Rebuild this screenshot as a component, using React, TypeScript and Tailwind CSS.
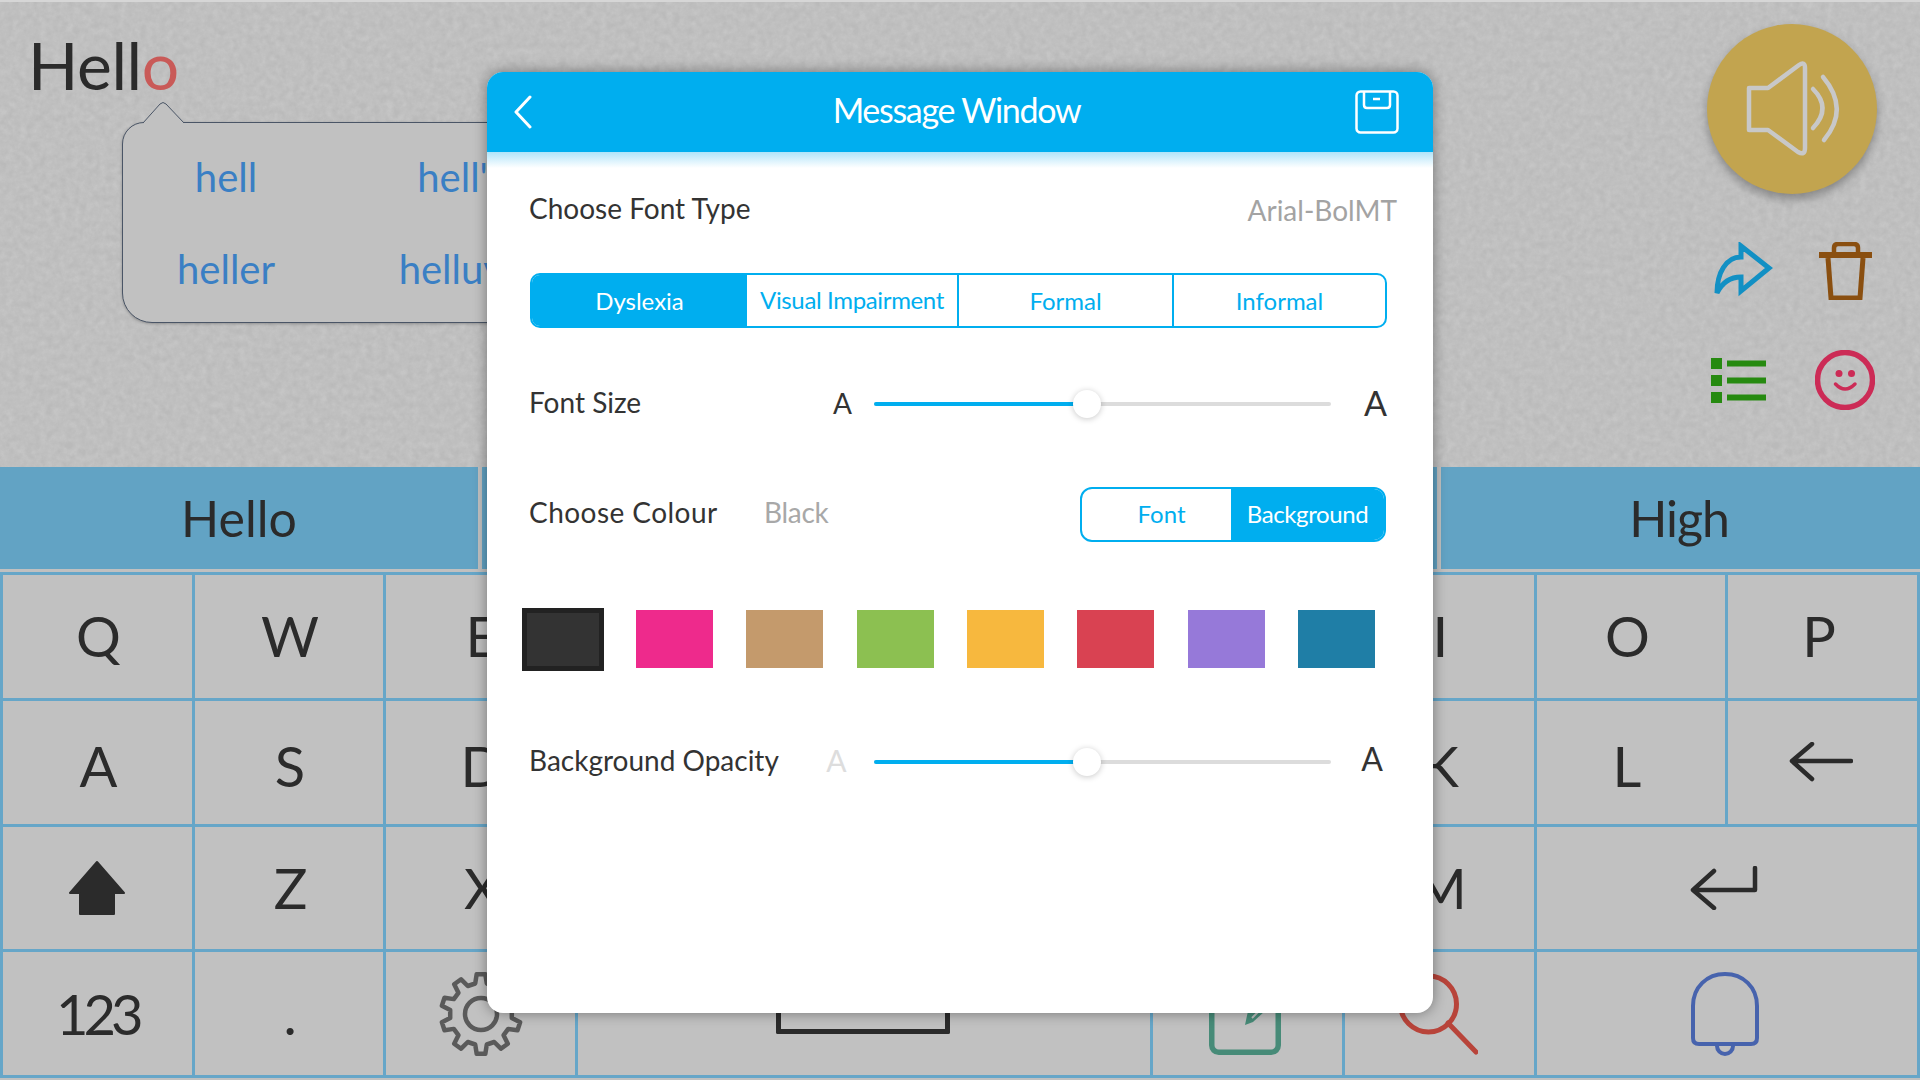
import React from 'react';

const row1 = ['Q', 'W', 'E', 'R', 'T', 'Y', 'U', 'I', 'O', 'P'];
const row2 = ['A', 'S', 'D', 'F', 'G', 'H', 'J', 'K', 'L'];
const row3 = ['Z', 'X', 'C', 'V', 'B', 'N', 'M'];
const swatches = ['#ee2a8c', '#c49a6c', '#8cc051', '#f7b83e', '#d94252', '#9679d9', '#1f7ea6'];

function gearPath(cx: number, cy: number, outer: number, root: number, teeth: number) {
  const pts: string[] = [];
  const step = (Math.PI * 2) / teeth;
  for (let i = 0; i < teeth; i++) {
    const a = i * step - Math.PI / 2;
    const list: [number, number][] = [
      [root, a - step * 0.3],
      [outer, a - step * 0.17],
      [outer, a + step * 0.17],
      [root, a + step * 0.3],
    ];
    list.forEach(([r, t]) => pts.push(`${(cx + r * Math.cos(t)).toFixed(1)} ${(cy + r * Math.sin(t)).toFixed(1)}`));
  }
  return `M${pts.join(' L')} Z`;
}

function Key({ children, className = '' }: { children?: React.ReactNode; className?: string }) {
  return (
    <div className={`flex items-center justify-center bg-[#c1c1c1] text-[56px] leading-none text-[#2b2b2b] ${className}`}>
      {children}
    </div>
  );
}

function Slider({ label, smallClass, bigClass }: { label: string; smallClass: string; bigClass: string }) {
  return (
    <div className="flex h-[44px] items-center">
      <span className="ml-[-1px] w-[291px] pb-[4px] text-[28px] text-[#333]">{label}</span>
      <span className={`w-[45px] text-center ${smallClass}`}>A</span>
      <div className="relative ml-[9px] h-[4px] w-[457px] rounded-full bg-[#dcdcdc]">
        <div className="h-full w-[213px] rounded-full bg-[#00aeef]" />
        <div className="absolute left-[199px] top-[-12px] h-[28px] w-[28px] rounded-full bg-white shadow-[0_1px_6px_rgba(0,0,0,0.22)]" />
      </div>
      <span className={`flex-1 text-right text-[#333] ${bigClass}`}>A</span>
    </div>
  );
}

function Modal() {
  return (
    <div className="absolute left-[487px] top-[72px] h-[941px] w-[946px] overflow-hidden rounded-[16px] bg-white shadow-[0_0_14px_rgba(0,0,0,0.4)]">
      <div className="grid h-[80px] grid-cols-[1fr_auto_1fr] items-center bg-[#00aeef] pl-[27px] pr-[34px]">
        <svg width="18" height="34" viewBox="0 0 18 34" fill="none" stroke="white" strokeWidth="3" strokeLinecap="round" strokeLinejoin="round">
          <path d="M16 2 L2 17 L16 32" />
        </svg>
        <span className="pb-[5px] text-[34px] tracking-[-1.3px] text-white">Message Window</span>
        <svg className="justify-self-end" width="44" height="44" viewBox="0 0 44 44" fill="none" stroke="white" strokeWidth="2.5" strokeLinejoin="round">
          <rect x="1.5" y="1.5" width="41" height="41" rx="4" />
          <path d="M9 2 V15 Q9 18 12 18 H32 Q35 18 35 15 V2" />
          <path d="M18 9 H25" />
        </svg>
      </div>
      <div className="h-[16px] bg-gradient-to-b from-[#b0e4f9] to-white" />

      <div className="pl-[43px] pr-[46px]">
        <div className="flex h-[84px] items-center justify-between">
          <span className="ml-[-1px] pb-[5px] text-[28px] text-[#333]">Choose Font Type</span>
          <span className="mr-[-10px] text-[28px] text-[#a3a3a3]">Arial-BolMT</span>
        </div>

        <div className="mt-[21px] flex h-[55px] overflow-hidden rounded-[10px] border-2 border-[#00aeef] pb-[2px] text-[24px] text-[#00aeef]">
          <div className="mb-[-2px] flex w-[215px] items-center justify-center bg-[#00aeef] text-white">Dyslexia</div>
          <div className="flex w-[210px] items-center justify-center tracking-[-0.35px]">Visual Impairment</div>
          <div className="mb-[-2px] flex w-[215px] items-center justify-center border-l-2 border-[#00aeef]">Formal</div>
          <div className="mb-[-2px] flex flex-1 items-center justify-center border-l-2 border-[#00aeef]">Informal</div>
        </div>

        <div className="mt-[54px]">
          <Slider label="Font Size" smallClass="pb-[2px] text-[28px] text-[#333]" bigClass="pb-[4px] text-[34px]" />
        </div>

        <div className="mt-[61px] flex h-[55px] items-center">
          <span className="ml-[-1px] w-[235px] pb-[6px] text-[28px] tracking-[0.45px] text-[#333]">Choose Colour</span>
          <span className="pb-[6px] text-[28px] tracking-[-0.3px] text-[#a8a8a8]">Black</span>
          <div className="ml-auto mr-[1px] flex h-full w-[306px] overflow-hidden rounded-[12px] border-2 border-[#00aeef] text-[24px]">
            <div className="flex w-[149px] items-center justify-center pb-[1px] pl-[10px] text-[#00aeef]">Font</div>
            <div className="flex flex-1 items-center justify-center bg-[#00aeef] pb-[1px] tracking-[-0.4px] text-white">Background</div>
          </div>
        </div>

        <div className="ml-[-8px] mt-[66px] flex h-[63px] items-start gap-[33.33px]">
          <div className="mr-[-1.33px] h-[63px] w-[82px] border-[5px] border-[#222] bg-[#333]" />
          {swatches.map((c) => (
            <div key={c} className="mt-[2px] h-[58px] w-[77px]" style={{ backgroundColor: c }} />
          ))}
        </div>

        <div className="mt-[69px]">
          <Slider label="Background Opacity" smallClass="ml-[-6px] mr-[6px] pb-[4px] text-[30px] text-[#dddddd]" bigClass="pb-[7px] pr-[4px] text-[32px]" />
        </div>
      </div>
    </div>
  );
}

export default function App() {
  return (
    <div className="relative h-[1080px] w-[1920px] overflow-hidden bg-[#c0c0c0] font-['Lato',sans-serif]">
      <div className="relative flex h-[467px] justify-between border-t-2 border-[#d6d6d6] bg-[#bababa] pl-[28px] pr-[43px]">
        {/* paper grain of the writing area */}
        <svg className="absolute left-0 top-0 h-[465px] w-[1920px] opacity-70">
          <filter id="grain">
            <feTurbulence type="fractalNoise" baseFrequency="0.15" numOctaves="3" seed="4" />
            <feColorMatrix values="0 0 0 0 0.6  0 0 0 0 0.6  0 0 0 0 0.6  1 1 0 0 -0.55" />
          </filter>
          <rect width="1920" height="465" filter="url(#grain)" />
        </svg>

        <div className="relative pt-[23px] text-[66px] leading-[80px] tracking-[-0.4px] text-[#2b2b2b]">
          Hell<span className="text-[#c95a58]">o</span>
        </div>

        <div className="relative pt-[22px]">
          <div className="flex h-[170px] w-[170px] items-center justify-center rounded-full bg-[#c2a44f] shadow-[0_5px_10px_rgba(0,0,0,0.3)]">
            <svg width="170" height="170" viewBox="0 0 170 170" fill="none" stroke="#c8c8c8" strokeWidth="4.5" strokeLinecap="round" strokeLinejoin="round">
              <path d="M42 64 H61 L92 41 Q98 37 98 44 V124 Q98 132 91 128 L61 106 H42 Z" strokeLinecap="butt" />
              <path d="M106 65 Q125 84 106 104" />
              <path d="M116 53 Q143 85 117 116" />
            </svg>
          </div>
          <div className="mt-[48px] flex items-center justify-between pl-[7px] pr-[5px]">
            <svg width="59" height="58" viewBox="0 0 59 58" fill="none" stroke="#1290c4" strokeWidth="5">
              <path d="M27 4 L55 26 L27 49 V35 C16 35 8 41 3 51 C3 31 12 15 27 15 Z" />
            </svg>
            <svg width="53" height="58" viewBox="0 0 53 58" fill="none" stroke="#8a4f10">
              <path d="M0 13 H53" strokeWidth="6" />
              <path d="M15 10 V6 Q15 2 19 2 H35 Q39 2 39 6 V10" strokeWidth="4.5" />
              <path d="M9 16 L12 56 H41 L44 16" strokeWidth="5" />
            </svg>
          </div>
          <div className="mt-[50px] flex items-center justify-between pl-[4px] pr-[2px]">
            <svg width="55" height="45" viewBox="0 0 55 45" fill="#268a10">
              <rect width="11" height="11" />
              <rect y="17" width="11" height="11" />
              <rect y="34" width="11" height="11" />
              <rect x="16" y="2.5" width="39" height="6" />
              <rect x="16" y="19.5" width="39" height="6" />
              <rect x="16" y="36.5" width="39" height="6" />
            </svg>
            <svg width="60" height="60" viewBox="-30 -30 60 60" fill="none" stroke="#cc2b56" strokeWidth="5.5">
              <circle r="27.5" />
              <circle cx="-6" cy="-6.5" r="3.5" fill="#cc2b56" stroke="none" />
              <circle cx="6.5" cy="-6.5" r="3.5" fill="#cc2b56" stroke="none" />
              <path d="M-9.5 4 Q0 14 10 4" strokeWidth="3.5" strokeLinecap="round" />
            </svg>
          </div>
        </div>
      </div>

      {/* spelling suggestions */}
      <div className="absolute left-[122px] top-[122px] h-[201px] w-[1000px] rounded-[22px] rounded-bl-[30px] border border-[#4a5566] bg-[#c1c1c1] shadow-[0_1px_3px_rgba(0,0,0,0.25)]">
        <svg className="absolute left-[18px] top-[-22px]" width="44" height="24" viewBox="0 0 44 24" fill="#c1c1c1" stroke="#4a5566">
          <path d="M2 22 L19 3 Q22 0 25 3 L43 22" />
          <path d="M3 23 H42" stroke="#c1c1c1" strokeWidth="3" />
        </svg>
        <div className="ml-[-12px] grid grid-cols-[230px_240px] pt-[8px] text-center text-[40px] leading-[92px] text-[#3a7fc4]">
          <span>hell</span>
          <span>hell's</span>
          <span>heller</span>
          <span>helluva</span>
        </div>
      </div>

      {/* word prediction bar */}
      <div className="flex h-[102px] gap-[4px] text-[50px] text-[#2b2b2b]">
        <div className="flex w-[478px] items-center justify-center bg-[#62a3c4]">Hello</div>
        <div className="flex flex-1 items-center justify-center bg-[#62a3c4]">Hi</div>
        <div className="flex w-[479px] items-center justify-center bg-[#62a3c4] pr-[3px] tracking-[-1px]">High</div>
      </div>

      <div className="mt-[3px] grid h-[506px] grid-cols-10 grid-rows-4 gap-[3px] bg-[#66a6c8] p-[3px]">
        {row1.map((k) => (
          <Key key={k} className={k === 'O' || k === 'P' ? 'pr-[7px]' : 'pl-[2px]'}>{k}</Key>
        ))}
        {row2.map((k) => (
          <Key key={k} className={k === 'L' ? 'pr-[8px] pt-[8px]' : 'pl-[2px] pt-[8px]'}>{k}</Key>
        ))}
        <Key className="pr-[3px]">
          <svg width="64" height="40" viewBox="0 0 64 40" fill="none" stroke="#2b2b2b" strokeWidth="4.5" strokeLinecap="round" strokeLinejoin="round">
            <path d="M3 19 H62 M23 2 L3 19 L23 37" />
          </svg>
        </Key>

        <Key>
          <svg width="58" height="56" viewBox="0 0 58 56" fill="#2b2b2b" stroke="#2b2b2b" strokeWidth="2" strokeLinejoin="round">
            <path d="M29 2 L56 33 H46 V54 H12 V33 H2 Z" />
          </svg>
        </Key>
        {row3.map((k) => (
          <Key key={k} className="pl-[3px]">{k}</Key>
        ))}
        <Key className="col-span-2 pr-[6px]">
          <svg width="68" height="44" viewBox="0 0 68 44" fill="none" stroke="#2b2b2b" strokeWidth="4.5" strokeLinecap="round" strokeLinejoin="round">
            <path d="M65 2 V24 H3 M24 5 L3 24 L24 42" />
          </svg>
        </Key>

        <Key className="tracking-[-5px]">123</Key>
        <Key className="pl-[2px]">.</Key>
        <Key>
          <svg width="84" height="84" viewBox="0 0 84 84" fill="none" stroke="#5a5a5a" strokeWidth="4.5" strokeLinejoin="round">
            <path d={gearPath(42, 42, 40, 31, 10)} />
            <circle cx="42" cy="42" r="16" />
          </svg>
        </Key>
        <Key className="col-span-3 pr-[2px]">
          <div className="mt-[-20px] h-[60px] w-[174px] rounded-b-[2px] border-x-[5px] border-b-[5px] border-[#2b2b2b]" />
        </Key>
        <Key className="pr-[5px]">
          <svg width="72" height="82" viewBox="0 0 72 82" fill="none" stroke="#478b78" strokeWidth="5.5">
            <rect x="2.75" y="2.75" width="66.5" height="76.5" rx="7" />
            <path d="M36 52 L39 38 H56 L44 49 Z" fill="#478b78" stroke="none" />
            <path d="M43 45 L49 39" stroke="#c1c1c1" strokeWidth="2" />
          </svg>
        </Key>
        <Key className="pr-[3px]">
          <svg width="80" height="82" viewBox="0 0 80 82" fill="none" stroke="#b8443a" strokeWidth="5" strokeLinecap="round">
            <circle cx="30.5" cy="31" r="28" />
            <path d="M50 50 L78 79" />
          </svg>
        </Key>
        <Key className="col-span-2 pr-[4px]">
          <svg width="70" height="84" viewBox="0 0 70 84" fill="none" stroke="#4763ad" strokeWidth="4" strokeLinejoin="round">
            <path d="M35 2 C17 2 3 15 3 34 V66 Q3 72 9 72 H61 Q67 72 67 66 V34 C67 15 53 2 35 2 Z" />
            <path d="M27 72 V74 A8 8 0 0 0 43 74 V72" />
          </svg>
        </Key>
      </div>

      <Modal />
    </div>
  );
}
